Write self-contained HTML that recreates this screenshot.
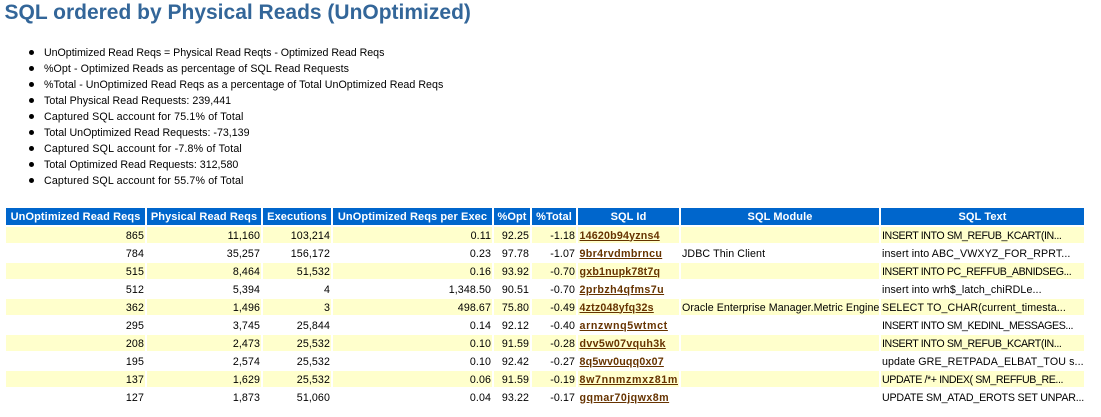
<!DOCTYPE html>
<html><head><meta charset="utf-8">
<style>
html,body{margin:0;padding:0;background:#fff;width:1101px;height:417px;overflow:hidden}
body{position:relative;font-family:"Liberation Sans",Arial,sans-serif;color:#000}
h1{position:absolute;left:4.5px;top:0;margin:0;font-size:21px;line-height:26px;font-weight:bold;color:#336699;white-space:nowrap}
ul{position:absolute;left:0;top:44px;margin:0;padding:0 0 0 44px;list-style:none;font-size:10.67px;line-height:16px;white-space:nowrap}
li{height:16px;position:relative;top:1px}
li:before{content:"";position:absolute;left:-15px;top:5px;width:5px;height:5px;border-radius:50%;background:#000}
table{position:absolute;left:4px;top:206px;border-collapse:separate;border-spacing:2px;table-layout:fixed;width:1082px;font-size:10.67px;letter-spacing:.1px}
th{background:#0066CC;color:#fff;font-weight:bold;font-size:11px;letter-spacing:.1px;height:16px;padding:1px 1px 0;line-height:15px;text-align:center;white-space:nowrap;overflow:hidden}
td{height:15px;padding:1px 1px 0;line-height:14px;white-space:nowrap;overflow:hidden;background:#fff}
tr.a td{background:#FFFFCC}
td.r{text-align:right}
td.n{letter-spacing:-.42px}
a{color:#663300;font-weight:bold;text-decoration:underline;letter-spacing:.2px;margin-left:.5px}
</style></head><body>
<h1>SQL ordered by Physical Reads (UnOptimized)</h1>
<ul>
<li style="letter-spacing:-.035px">UnOptimized Read Reqs = Physical Read Reqts - Optimized Read Reqs</li>
<li style="letter-spacing:.08px">%Opt - Optimized Reads as percentage of SQL Read Requests</li>
<li style="letter-spacing:.035px">%Total - UnOptimized Read Reqs as a percentage of Total UnOptimized Read Reqs</li>
<li style="letter-spacing:.03px">Total Physical Read Requests: 239,441</li>
<li style="letter-spacing:.15px">Captured SQL account for 75.1% of Total</li>
<li>Total UnOptimized Read Requests: -73,139</li>
<li style="letter-spacing:.17px">Captured SQL account for -7.8% of Total</li>
<li>Total Optimized Read Requests: 312,580</li>
<li style="letter-spacing:.15px">Captured SQL account for 55.7% of Total</li>
</ul>
<table>
<colgroup><col style="width:139px"><col style="width:114px"><col style="width:68px"><col style="width:159px"><col style="width:36px"><col style="width:44px"><col style="width:101px"><col style="width:198px"><col style="width:203px"></colgroup>
<tr><th>UnOptimized Read Reqs</th><th>Physical Read Reqs</th><th>Executions</th><th>UnOptimized Reqs per Exec</th><th>%Opt</th><th>%Total</th><th>SQL Id</th><th>SQL Module</th><th>SQL Text</th></tr>
<tr class="a"><td class="r">865</td><td class="r">11,160</td><td class="r">103,214</td><td class="r">0.11</td><td class="r">92.25</td><td class="r">-1.18</td><td><a>14620b94yzns4</a></td><td></td><td class="n">INSERT INTO SM_REFUB_KCART(IN...</td></tr>
<tr><td class="r">784</td><td class="r">35,257</td><td class="r">156,172</td><td class="r">0.23</td><td class="r">97.78</td><td class="r">-1.07</td><td><a style="letter-spacing:.35px">9br4rvdmbrncu</a></td><td>JDBC Thin Client</td><td>insert into ABC_VWXYZ_FOR_RPRT...</td></tr>
<tr class="a"><td class="r">515</td><td class="r">8,464</td><td class="r">51,532</td><td class="r">0.16</td><td class="r">93.92</td><td class="r">-0.70</td><td><a>gxb1nupk78t7q</a></td><td></td><td class="n">INSERT INTO PC_REFFUB_ABNIDSEG...</td></tr>
<tr><td class="r">512</td><td class="r">5,394</td><td class="r">4</td><td class="r">1,348.50</td><td class="r">90.51</td><td class="r">-0.70</td><td><a style="letter-spacing:.45px">2prbzh4qfms7u</a></td><td></td><td>insert into wrh$_latch_chiRDLe...</td></tr>
<tr class="a"><td class="r">362</td><td class="r">1,496</td><td class="r">3</td><td class="r">498.67</td><td class="r">75.80</td><td class="r">-0.49</td><td><a>4ztz048yfq32s</a></td><td style="letter-spacing:.05px">Oracle Enterprise Manager.Metric Engine</td><td>SELECT TO_CHAR(current_timesta...</td></tr>
<tr><td class="r">295</td><td class="r">3,745</td><td class="r">25,844</td><td class="r">0.14</td><td class="r">92.12</td><td class="r">-0.40</td><td><a style="letter-spacing:.65px">arnzwnq5wtmct</a></td><td></td><td class="n">INSERT INTO SM_KEDINL_MESSAGES...</td></tr>
<tr class="a"><td class="r">208</td><td class="r">2,473</td><td class="r">25,532</td><td class="r">0.10</td><td class="r">91.59</td><td class="r">-0.28</td><td><a style="letter-spacing:.35px">dvv5w07vquh3k</a></td><td></td><td class="n">INSERT INTO SM_REFUB_KCART(IN...</td></tr>
<tr><td class="r">195</td><td class="r">2,574</td><td class="r">25,532</td><td class="r">0.10</td><td class="r">92.42</td><td class="r">-0.27</td><td><a>8q5wv0uqq0x07</a></td><td></td><td>update GRE_RETPADA_ELBAT_TOU s...</td></tr>
<tr class="a"><td class="r">137</td><td class="r">1,629</td><td class="r">25,532</td><td class="r">0.06</td><td class="r">91.59</td><td class="r">-0.19</td><td><a style="letter-spacing:.65px">8w7nnmzmxz81m</a></td><td></td><td class="n">UPDATE /*+ INDEX( SM_REFFUB_RE...</td></tr>
<tr><td class="r">127</td><td class="r">1,873</td><td class="r">51,060</td><td class="r">0.04</td><td class="r">93.22</td><td class="r">-0.17</td><td><a style="letter-spacing:.47px">gqmar70jqwx8m</a></td><td></td><td style="letter-spacing:-.2px">UPDATE SM_ATAD_EROTS SET UNPAR...</td></tr>
</table>
</body></html>
